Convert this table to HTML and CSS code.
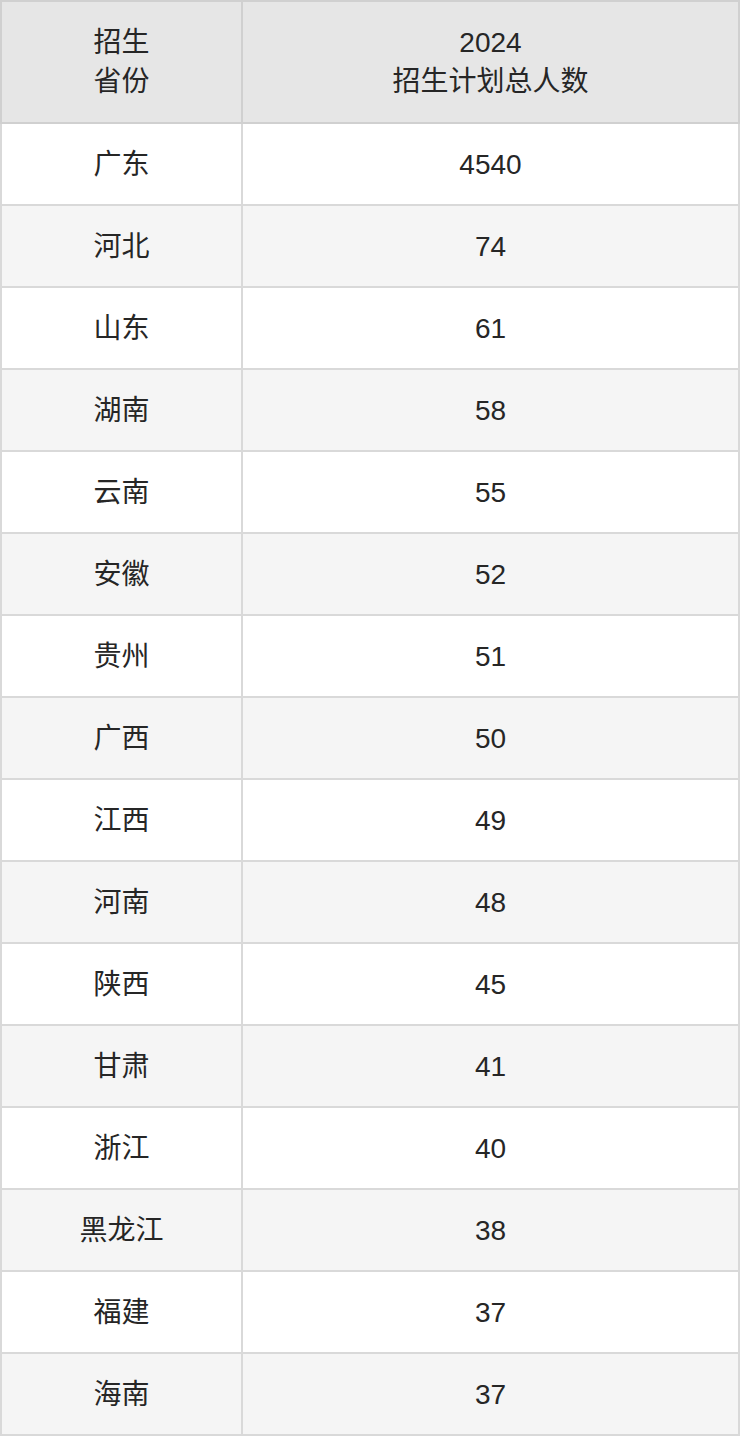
FILE: index.html
```html
<!DOCTYPE html>
<html lang="zh-CN">
<head>
<meta charset="utf-8">
<link rel="stylesheet" href="styles.css">
</head>
<body>
<table class="plan">
  <colgroup><col class="c1"><col class="c2"></colgroup>
  <thead>
    <tr><th>招生<br>省份</th><th>2024<br>招生计划总人数</th></tr>
  </thead>
  <tbody>
    <tr><td>广东</td><td>4540</td></tr>
    <tr><td>河北</td><td>74</td></tr>
    <tr><td>山东</td><td>61</td></tr>
    <tr><td>湖南</td><td>58</td></tr>
    <tr><td>云南</td><td>55</td></tr>
    <tr><td>安徽</td><td>52</td></tr>
    <tr><td>贵州</td><td>51</td></tr>
    <tr><td>广西</td><td>50</td></tr>
    <tr><td>江西</td><td>49</td></tr>
    <tr><td>河南</td><td>48</td></tr>
    <tr><td>陕西</td><td>45</td></tr>
    <tr><td>甘肃</td><td>41</td></tr>
    <tr><td>浙江</td><td>40</td></tr>
    <tr><td>黑龙江</td><td>38</td></tr>
    <tr><td>福建</td><td>37</td></tr>
    <tr><td>海南</td><td>37</td></tr>
  </tbody>
</table>
</body>
</html>
```
FILE: styles.css
```css
html, body {
  margin: 0;
  padding: 0;
  background: #ffffff;
}
.plan {
  width: 740px;
  border-collapse: collapse;
  table-layout: fixed;
  font-family: "Liberation Sans", "Noto Sans CJK SC", sans-serif;
  font-size: 28px;
  line-height: 39px;
  color: #262626;
}
.c1 { width: 241px; }
.plan th, .plan td {
  border: 2px solid #d9d9d9;
  text-align: center;
  vertical-align: middle;
  padding: 0;
}
.plan th {
  background: #e6e6e6;
  font-weight: normal;
  height: 120px;
  border-color: #d0d0d0;
}
.plan td {
  height: 80px;
}
.plan tbody tr:nth-child(even) td {
  background: #f5f5f5;
}
```
